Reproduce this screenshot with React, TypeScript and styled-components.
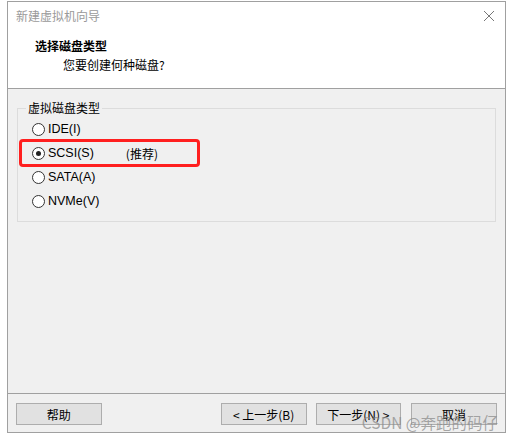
import React from "react";
import styled, { createGlobalStyle } from "styled-components";

const Global = createGlobalStyle`
  html, body { margin: 0; padding: 0; background: #ffffff; }
  body { font-family: "Liberation Sans", "Noto Sans CJK SC", sans-serif; font-size: 12px; color: #000; }
`;

const Page = styled.div`
  width: 513px;
  height: 440px;
  padding: 1px 0 0 7px;
  box-sizing: border-box;
`;

const Window = styled.div`
  position: relative;
  width: 499px;
  height: 432px;
  box-sizing: border-box;
  border: 1px solid #a0a0a0;
  display: flex;
  flex-direction: column;
  background: #f0f0f0;
`;

const Header = styled.div`
  background: #ffffff;
  height: 86px;
  border-bottom: 1px solid #a0a0a0;
  display: flex;
  flex-direction: column;
`;

const TitleBar = styled.div`
  height: 27px;
  display: flex;
  align-items: center;
  justify-content: space-between;
  padding: 0 10px 0 8px;
`;

const TitleText = styled.span`
  font-family: "Noto Sans CJK SC", sans-serif;
  font-size: 12px;
  color: #9a9a9a;
`;

const CloseIcon = styled.svg`
  width: 12px;
  height: 12px;
`;

const Heading = styled.div`
  font-family: "Noto Sans CJK SC", sans-serif;
  font-weight: 700;
  font-size: 12px;
  margin: 9px 0 0 27px;
  line-height: 16px;
`;

const SubHeading = styled.div`
  font-family: "Noto Sans CJK SC", sans-serif;
  font-size: 12px;
  margin: 3px 0 0 55px;
  line-height: 16px;
`;

const Body = styled.div`
  flex: 1;
  padding: 12px 9px 0 9px;
`;

const Group = styled.fieldset`
  margin: 0;
  height: 121px;
  box-sizing: border-box;
  border: 1px solid #dcdcdc;
  padding: 2px 0 0 14px;
  display: flex;
  flex-direction: column;
`;

const Legend = styled.legend`
  font-family: "Noto Sans CJK SC", sans-serif;
  font-size: 12px;
  padding: 0 2px;
  margin-left: -6px;
  line-height: 14px;
`;

const Option = styled.label`
  display: flex;
  align-items: center;
  height: 24px;
  gap: 3px;
  font-family: "Liberation Sans", "Noto Sans CJK SC", sans-serif;
  font-size: 12.5px;
  color: #000;
`;

const Radio = styled.span<{ $checked?: boolean }>`
  width: 13px;
  height: 13px;
  box-sizing: border-box;
  border: 1px solid #333;
  border-radius: 50%;
  background: #fff;
  display: flex;
  align-items: center;
  justify-content: center;
  &::after {
    content: "";
    width: 5px;
    height: 5px;
    border-radius: 50%;
    background: ${(p) => (p.$checked ? "#222" : "transparent")};
  }
`;

const Recommend = styled.span`
  margin-left: 29px;
  font-family: "Noto Sans CJK SC", sans-serif;
  font-size: 12px;
`;

const Highlight = styled.div`
  position: absolute;
  left: 11px;
  top: 137px;
  width: 175px;
  height: 22px;
  border: 3px solid #ff1f1f;
  border-radius: 4px;
  pointer-events: none;
`;

const Footer = styled.div`
  border-top: 1px solid #a0a0a0;
  height: 39px;
  box-sizing: border-box;
  display: flex;
  align-items: flex-start;
  padding: 9px 8px 0 8px;
`;

const Button = styled.button<{ $gap?: number }>`
  width: 86px;
  height: 22px;
  margin-left: ${(p) => p.$gap ?? 0}px;
  border: 1px solid #adadad;
  background: #e1e1e1;
  font-family: "Noto Sans CJK SC", sans-serif;
  font-size: 12px;
  color: #000;
  padding: 0;
  display: flex;
  align-items: center;
  justify-content: center;
`;

const Watermark = styled.div`
  position: absolute;
  right: 7px;
  bottom: -1px;
  font-family: "Noto Sans CJK SC", sans-serif;
  font-size: 15.5px;
  color: rgba(140, 140, 140, 0.75);
  pointer-events: none;
`;

export default function App() {
  return (
    <>
      <Global />
      <Page>
        <Window>
          <Header>
            <TitleBar>
              <TitleText>新建虚拟机向导</TitleText>
              <CloseIcon viewBox="0 0 12 12">
                <path d="M1 1 L11 11 M11 1 L1 11" stroke="#777" strokeWidth="1" />
              </CloseIcon>
            </TitleBar>
            <Heading>选择磁盘类型</Heading>
            <SubHeading>您要创建何种磁盘?</SubHeading>
          </Header>
          <Body>
            <Group>
              <Legend>虚拟磁盘类型</Legend>
              <Option><Radio />IDE(I)</Option>
              <Option><Radio $checked />SCSI(S)<Recommend>(推荐)</Recommend></Option>
              <Option><Radio />SATA(A)</Option>
              <Option><Radio />NVMe(V)</Option>
            </Group>
          </Body>
          <Highlight />
          <Footer>
            <Button>帮助</Button>
            <Button $gap={119}>&lt; 上一步(B)</Button>
            <Button $gap={9}>下一步(N) &gt;</Button>
            <Button $gap={10}>取消</Button>
          </Footer>
          <Watermark>CSDN @奔跑的码仔</Watermark>
        </Window>
      </Page>
    </>
  );
}
